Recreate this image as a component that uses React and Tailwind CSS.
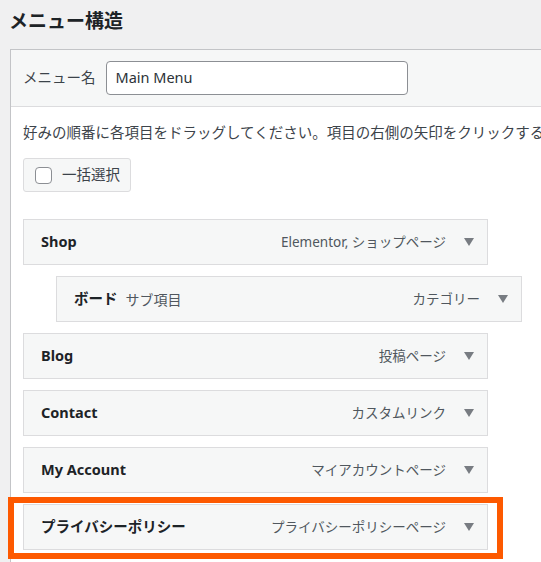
import React from 'react'

const items = [
  { title: 'Shop', type: 'Elementor, ショップページ' },
  { title: 'ボード', sub: 'サブ項目', type: 'カテゴリー', depth: 1 },
  { title: 'Blog', type: '投稿ページ' },
  { title: 'Contact', type: 'カスタムリンク' },
  { title: 'My Account', type: 'マイアカウントページ' },
  { title: 'プライバシーポリシー', type: 'プライバシーポリシーページ' },
]

function Arrow() {
  return (
    <svg width="10" height="8" viewBox="0 0 10 8" className="shrink-0">
      <path d="M0 0h10L5 8z" fill="#787c82" />
    </svg>
  )
}

function MenuItem({ item }) {
  return (
    <div
      className={`flex h-[46px] w-[465px] items-center border border-[#dcdcde] bg-[#f6f7f7] pl-[17px] pr-[13px] ${
        item.depth ? 'ml-[33px] w-[466px]' : ''
      }`}
    >
      <span className="text-[14.5px] font-bold text-[#1d2327]">{item.title}</span>
      {item.sub && <span className="ml-[8px] text-[14px] text-[#50575e]">{item.sub}</span>}
      <span className="ml-auto mr-[18px] text-[13.5px] text-[#50575e]">{item.type}</span>
      <Arrow />
    </div>
  )
}

export default function App() {
  return (
    <div
      className="relative h-[562px] w-[541px] overflow-hidden bg-[#f0f0f1] text-[#1d2327]"
      style={{ fontFamily: "'Noto Sans', 'Noto Sans CJK JP', sans-serif" }}
    >
      <h2 className="pl-[9px] pt-[6px] text-[19px] font-bold leading-[30px]">メニュー構造</h2>

      <div className="ml-[10px] mt-[13px] w-[620px] border border-[#c3c4c7] bg-white">
        <div className="flex h-[57px] items-center border-b border-[#dcdcde] bg-[#f6f7f7] px-[12px]">
          <span className="text-[14.5px] text-[#3c434a]">メニュー名</span>
          <div className="ml-[10px] flex h-[34px] w-[302px] items-center rounded-[4px] border border-[#8c8f94] bg-white px-[9px] text-[14.5px] text-[#2c3338]">
            Main Menu
          </div>
        </div>

        <div className="px-[12px] pt-[15px] pb-[20px]">
          <p className="whitespace-nowrap text-[14.5px] leading-[20px] text-[#3c434a]">
            好みの順番に各項目をドラッグしてください。項目の右側の矢印をクリックすると、追加の設定オプションが表示されます。
          </p>

          <div className="mt-[16px] flex h-[34px] w-[108px] items-center rounded-[3px] border border-[#dcdcde] bg-[#f6f7f7] pl-[11px]">
            <span className="h-[17px] w-[17px] rounded-[4px] border border-[#8c8f94] bg-white" />
            <span className="ml-[10px] text-[14.5px] text-[#3c434a]">一括選択</span>
          </div>

          <div className="mt-[27px] flex flex-col gap-[11px]">
            {items.map((item) => (
              <MenuItem key={item.title} item={item} />
            ))}
          </div>
        </div>
      </div>

      <div className="absolute left-[8px] top-[497px] h-[62px] w-[495px] border-[6px] border-[#fd5900]" />
    </div>
  )
}
